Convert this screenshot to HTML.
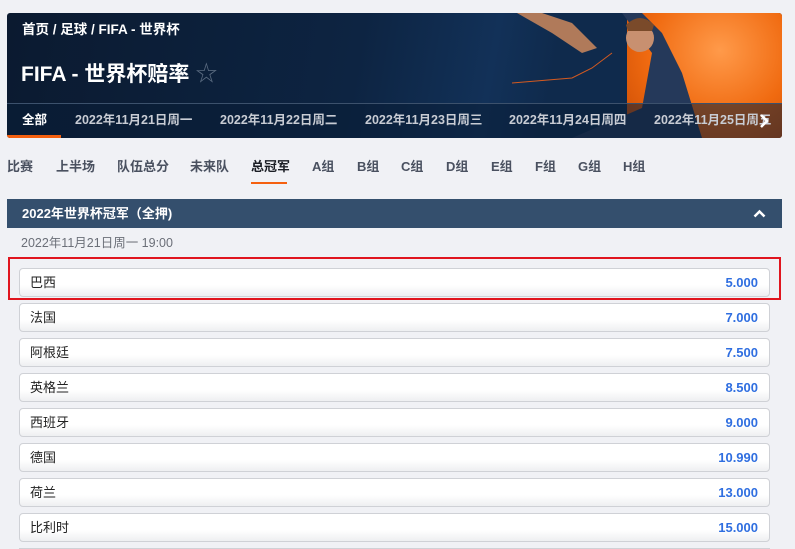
<!DOCTYPE html>
<html><head><meta charset="utf-8"><style>
*{margin:0;padding:0;box-sizing:border-box}
html,body{width:795px;height:549px;overflow:hidden}
body{background:#f0f1f5;font-family:"Liberation Sans","Noto Sans CJK SC",sans-serif;position:relative}
.banner{position:absolute;left:7px;top:13px;width:775px;height:125px;border-radius:3px;overflow:hidden;background:linear-gradient(100deg,#0b1a30 0%,#0d2442 45%,#123158 62%,#0f2a4c 70%);}
.orange{position:absolute;left:620px;top:0;width:155px;height:125px;background:radial-gradient(ellipse at 60% 30%,#ff9a4a,#f06a10 55%,#c84a05)}
.player{position:absolute;left:505px;top:0;width:190px;height:125px}
.bc{position:absolute;left:15px;top:8px;color:#fff;font-size:13.5px;font-weight:bold;line-height:18px}
.title{position:absolute;left:14px;top:47px;color:#fff;font-size:21px;font-weight:bold;line-height:28px}
.star{color:#5a6b80;font-size:22px;margin-left:6px;font-weight:normal}
.tabs{position:absolute;left:0;top:90px;width:775px;height:35px;border-top:1px solid #3c516c;background:rgba(10,30,55,.55)}
.tabs span{position:absolute;top:8px;color:#c8ccd4;font-size:12.5px;font-weight:bold;white-space:nowrap;line-height:16px}
.ul{position:absolute;left:0;bottom:0;width:54px;height:3px;background:#f5600f}
.sub{position:absolute;top:158px;font-size:13px;font-weight:bold;color:#4a5160;line-height:17px}
.sec{position:absolute;left:7px;top:199px;width:775px;height:29px;background:#344f6d;color:#fff;font-size:13px;font-weight:bold;padding:0 15px;line-height:29px}
.date{position:absolute;left:21px;top:235px;font-size:12.5px;color:#6b6f78;line-height:16px}
.row{position:absolute;left:19px;width:751px;height:29px;border:1px solid #cfd1d6;border-radius:4px;background:linear-gradient(#fff 60%,#eeeff1);font-size:13px;color:#222;padding:0 10px;line-height:27px}
.row b{position:absolute;right:11px;top:0;color:#2f6ee0;font-size:13px}
.red{position:absolute;left:8px;top:257px;width:773px;height:43px;border:2px solid #e0151e}
</style></head><body>
<div class="banner">
<div class="orange"></div>
<svg class="player" viewBox="0 0 190 125"><path d="M0 70 L60 65 L80 55 L100 40" stroke="#d45a20" fill="none"/><path d="M110 0 L140 40 L130 95 L60 125 L190 125 L170 60 L150 20 L130 0Z" fill="#25395a"/><circle cx="128" cy="25" r="14" fill="#c89070"/><path d="M114 12 Q128 -2 142 12 L140 18 L116 18Z" fill="#7a4a2a"/><path d="M5 0 L40 20 L70 40 L85 35 L60 10 L30 0Z" fill="#b07a5a"/></svg>
<div class="bc">首页 / 足球 / FIFA - 世界杯</div>
<div class="title">FIFA - 世界杯赔率<span class="star">☆</span></div>
<div class="tabs">
<span style="left:15px;color:#fff">全部</span>
<span style="left:68px">2022年11月21日周一</span>
<span style="left:213px">2022年11月22日周二</span>
<span style="left:358px">2022年11月23日周三</span>
<span style="left:502px">2022年11月24日周四</span>
<span style="left:647px">2022年11月25日周五</span>
<svg style="position:absolute;left:752px;top:9px" width="10" height="16" viewBox="0 0 10 16"><path d="M2 2 L8 8 L2 14" stroke="#fff" stroke-width="2.5" fill="none"/></svg>
<div class="ul"></div>
</div>
</div>
<div class="sub" style="left:7px">比赛</div>
<div class="sub" style="left:56px">上半场</div>
<div class="sub" style="left:117px">队伍总分</div>
<div class="sub" style="left:190px">未来队</div>
<div class="sub" style="left:251px;color:#1a1d24">总冠军</div>
<div style="position:absolute;left:251px;top:182px;width:36px;height:2px;background:#f5600f"></div>
<div class="sub" style="left:312px">A组</div>
<div class="sub" style="left:357px">B组</div>
<div class="sub" style="left:401px">C组</div>
<div class="sub" style="left:446px">D组</div>
<div class="sub" style="left:491px">E组</div>
<div class="sub" style="left:535px">F组</div>
<div class="sub" style="left:578px">G组</div>
<div class="sub" style="left:623px">H组</div>
<div class="sec">2022年世界杯冠军（全押)<svg style="position:absolute;right:16px;top:10px" width="13" height="9" viewBox="0 0 13 9"><path d="M1.5 7.5 L6.5 2.5 L11.5 7.5" stroke="#fff" stroke-width="2.5" fill="none"/></svg></div>
<div class="date">2022年11月21日周一 19:00</div>
<div class="row" style="top:268px">巴西<b>5.000</b></div>
<div class="row" style="top:303px">法国<b>7.000</b></div>
<div class="row" style="top:338px">阿根廷<b>7.500</b></div>
<div class="row" style="top:373px">英格兰<b>8.500</b></div>
<div class="row" style="top:408px">西班牙<b>9.000</b></div>
<div class="row" style="top:443px">德国<b>10.990</b></div>
<div class="row" style="top:478px">荷兰<b>13.000</b></div>
<div class="row" style="top:513px">比利时<b>15.000</b></div>
<div style="position:absolute;left:19px;top:548px;width:751px;height:1px;background:#cfd1d6"></div>
<div class="red"></div>
</body></html>
